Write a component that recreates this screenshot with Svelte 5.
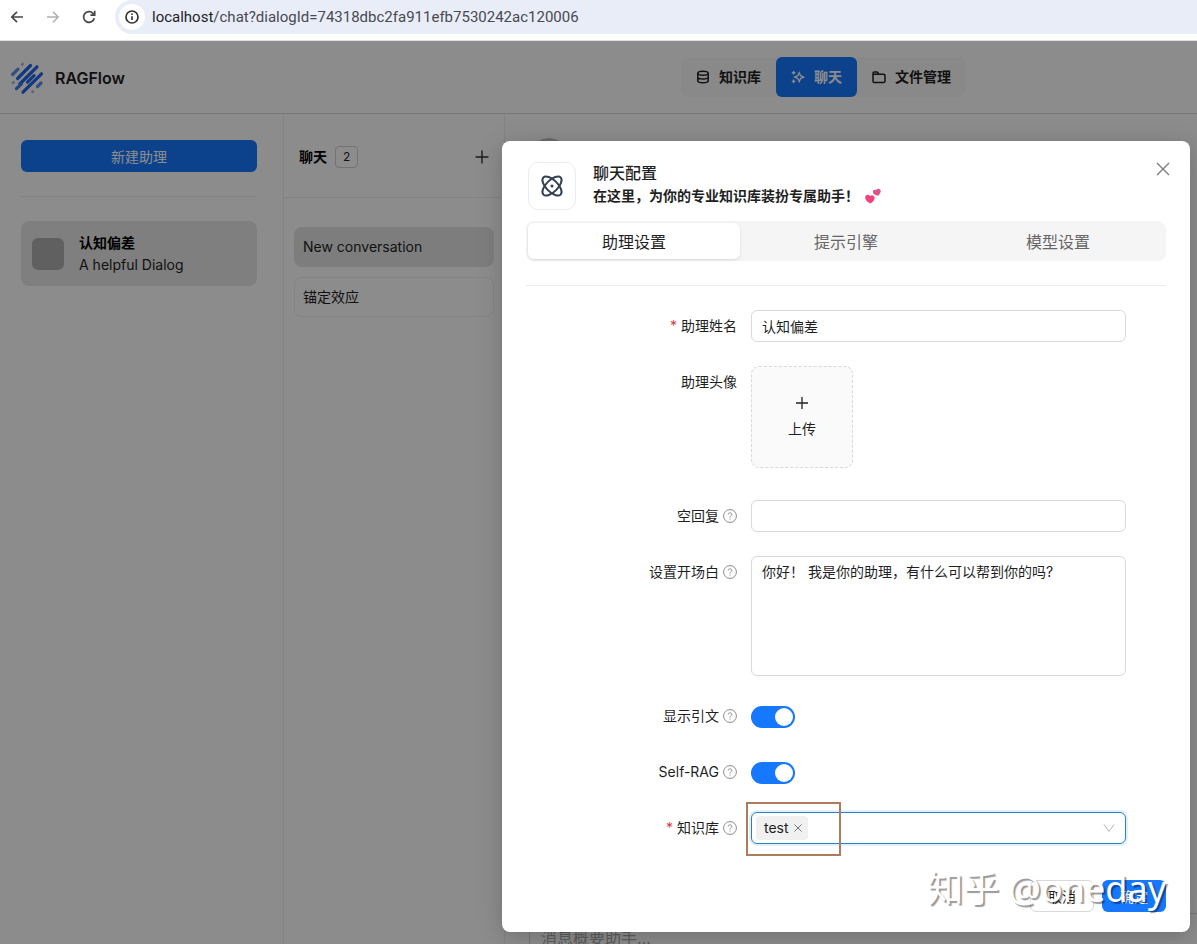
<script>
  let tab = $state(0);
  let name = $state('认知偏差');
  let emptyReply = $state('');
  let prologue = $state('你好！ 我是你的助理，有什么可以帮到你的吗?');
  let quote = $state(true);
  let selfRag = $state(true);
  let bases = $state(['test']);
  const tabs = ['助理设置', '提示引擎', '模型设置'];
</script>

{#snippet help()}
  <svg class="help" width="14" height="14" viewBox="0 0 14 14" fill="none" stroke="currentColor" aria-hidden="true">
    <circle cx="7" cy="7" r="6.4" />
    <path d="M5.1 5.6c0-1.1.8-1.8 1.9-1.8s1.9.7 1.9 1.7c0 1.4-1.9 1.4-1.9 2.9" />
    <path d="M7 9.5v1.1" />
  </svg>
{/snippet}

<div class="window">
  <div class="browser">
    <button aria-label="后退"><svg width="16" height="16" viewBox="0 0 16 16" fill="none" stroke="#474747" stroke-width="1.7"><path d="M14 8H3M8 2.8 2.8 8 8 13.2" /></svg></button>
    <button aria-label="前进"><svg width="16" height="16" viewBox="0 0 16 16" fill="none" stroke="#b0b0b0" stroke-width="1.5"><path d="M2 8h11M8 2.8 13.2 8 8 13.2" /></svg></button>
    <button aria-label="刷新"><svg width="16" height="16" viewBox="0 0 16 16" fill="none" stroke="#474747" stroke-width="1.7"><path d="M13.3 9.2A5.4 5.4 0 1 1 12 4.3l1.6 1.5M13.7 1.8v4.3H9.4" /></svg></button>
    <div class="address">
      <span class="site"><svg width="16" height="16" viewBox="0 0 16 16" fill="none" stroke="#333" stroke-width="1.7"><circle cx="8" cy="8" r="6" /><path d="M8 7.3v3.8M8 4.6v1.5" /></svg></span>
      <span class="url"><b>localhost</b>/chat?dialogId=74318dbc2fa911efb7530242ac120006</span>
    </div>
  </div>

  <div class="app">
    <header>
      <a class="brand" href="#home">
        <svg width="34" height="34" viewBox="0 0 34 34" fill="none" stroke-linecap="round" stroke-width="3.2">
          <g stroke="#2566e8">
            <path d="M7.6 17.5 20.5 4.5" /><path d="M9.8 23 27 5.8" />
            <path d="M13 31.2 31.500 12.8" /><path d="M17.500 21.2 24 14.6" />
          </g>
          <path d="M2.6 13.5 8 8.2" stroke="#5b92e8" />
          <path d="M6.5 27.6 11.5 22.800" stroke="#3f7de6" />
          <path d="M27.5 25.5 31 22" stroke="#5b92e8" />
          <g stroke="#a5bce0" stroke-width="2.8"><path d="M3 21.8l.6-.5M22.5 30.8l.4-.4M12.2 3.5l.4-.4" /></g>
        </svg>
        <span>RAGFlow</span>
      </a>
      <nav>
        <a href="#knowledge"><svg width="14" height="14" viewBox="0 0 14 14" fill="none" stroke="currentColor" stroke-width="1.5"><ellipse cx="7" cy="3.2" rx="5.2" ry="2" /><path d="M1.8 3.2v7.6c0 1.1 2.3 2 5.2 2s5.2-.9 5.2-2V3.2M1.8 7c0 1.1 2.3 2 5.2 2s5.2-.9 5.2-2" /></svg>知识库</a>
        <a href="#chat" class="active"><svg width="14" height="14" viewBox="0 0 14 14" fill="none" stroke="currentColor" stroke-width="1.4"><path d="m8.2 2.7 1.4 3 3 1.4-3 1.4-1.4 3-1.4-3-3-1.4 3-1.4zM2.6 1v3.6M.8 2.8h3.6M2.6 9.6v3.6M.8 11.4h3.6" /></svg>聊天</a>
        <a href="#files"><svg width="14" height="14" viewBox="0 0 14 14" fill="none" stroke="currentColor" stroke-width="1.5"><path d="M1 11V3.4c0-.8.5-1.3 1.3-1.3h2.5c.6 0 .9.2 1.2.7l.8 1.4h4.4c1.1 0 1.8.6 1.8 1.7V11c0 1-.6 1.6-1.6 1.6H2.6C1.6 12.6 1 12 1 11zM1 4.3h6" /></svg>文件管理</a>
      </nav>
    </header>

    <div class="columns">
      <aside class="assistants">
        <button class="primary">新建助理</button>
        <hr />
        <div class="assistant">
          <span class="thumb"></span>
          <div><strong>认知偏差</strong><span>A helpful Dialog</span></div>
        </div>
      </aside>
      <section class="talks">
        <div class="talks-head">
          <strong>聊天</strong><span class="count">2</span>
          <button aria-label="新建聊天"><svg width="14" height="14" viewBox="0 0 14 14" stroke="#333" stroke-width="1.4"><path d="M7 .5v13M.5 7h13" /></svg></button>
        </div>
        <ul>
          <li class="current">New conversation</li>
          <li>锚定效应</li>
        </ul>
      </section>
      <main>
        <span class="avatar"></span>
        <input class="composer" aria-label="消息" placeholder="消息概要助手..." />
      </main>
    </div>

    <div class="mask">
      <div class="modal" role="dialog" aria-labelledby="dialog-title">
        <div class="modal-head">
          <span class="logo-box">
            <svg width="24" height="24" viewBox="0 0 24 24" fill="none" stroke="#344054" stroke-width="2">
              <ellipse cx="12" cy="12" rx="12.2" ry="5.8" transform="rotate(45 12 12)" />
              <ellipse cx="12" cy="12" rx="12.2" ry="5.8" transform="rotate(-45 12 12)" />
              <circle cx="12" cy="12" r="1.5" fill="#344054" stroke="none" />
            </svg>
          </span>
          <div class="titles">
            <h1 id="dialog-title">聊天配置</h1>
            <p>在这里，为你的专业知识库装扮专属助手！
              <svg width="16" height="16" viewBox="0 0 16 16"><path fill="#f2447c" d="M5.6 15.6C2.800 14.400.3 12.300.2 9.700 0 6.900 3.300 5.700 5 8c2.200-1.800 5.200.1 4.600 2.800-.5 2-2.400 3.700-4 4.800z" /><path fill="#d9538c" d="M13.200 7.800C10.900 7.500 8.400 6.500 7.900 4.600 7.400 2.500 9.500 1 11.200 2.300c.8-2.200 4.300-1.900 4.500.6.1 1.700-1.300 3.500-2.500 4.900z" /></svg>
            </p>
          </div>
          <button class="close" aria-label="关闭"><svg width="14" height="14" viewBox="0 0 14 14" stroke="#7d7d7d" stroke-width="1.4"><path d="m1 1 12 12M13 1 1 13" /></svg></button>
        </div>

        <div class="tabs" role="tablist">
          {#each tabs as label, i}
            <button role="tab" aria-selected={tab === i} class:selected={tab === i} onclick={() => (tab = i)}>{label}</button>
          {/each}
        </div>
        <hr />

        <form onsubmit={(e) => e.preventDefault()}>
          <div class="row">
            <label for="name"><i>*</i>助理姓名</label>
            <input id="name" class="field" type="text" bind:value={name} />
          </div>
          <div class="row avatar-row">
            <label for="upload">助理头像</label>
            <button id="upload" class="upload" type="button">
              <svg width="14" height="14" viewBox="0 0 14 14" stroke="#222" stroke-width="1.3"><path d="M7 1v12M1 7h12" /></svg>
              上传
            </button>
          </div>
          <div class="row">
            <label for="empty">空回复{@render help()}</label>
            <input id="empty" class="field" type="text" bind:value={emptyReply} />
          </div>
          <div class="row">
            <label for="prologue">设置开场白{@render help()}</label>
            <textarea id="prologue" class="field" bind:value={prologue}></textarea>
          </div>
          <div class="row">
            <label for="quote">显示引文{@render help()}</label>
            <input id="quote" class="switch" type="checkbox" role="switch" bind:checked={quote} />
          </div>
          <div class="row">
            <label for="rag">Self-RAG{@render help()}</label>
            <input id="rag" class="switch" type="checkbox" role="switch" bind:checked={selfRag} />
          </div>
          <div class="row">
            <label for="base"><i>*</i>知识库{@render help()}</label>
            <div class="picker">
              {#each bases as base}
                <span class="tag">{base}<button type="button" aria-label="移除" onclick={() => (bases = [])}><svg width="8" height="8" viewBox="0 0 8 8" stroke="#777"><path d="m.5.5 7 7M7.5.5l-7 7" /></svg></button></span>
              {/each}
              <select id="base"><option value=""></option></select>
              <svg class="chevron" width="12" height="12" viewBox="0 0 12 12" fill="none" stroke="#b5b5b5"><path d="m1 2.5 5 7 5-7" /></svg>
              <span class="marker"></span>
            </div>
          </div>
          <footer>
            <button type="button">取消</button>
            <button type="submit" class="primary">确定</button>
            <span class="watermark">知乎 @oneday</span>
          </footer>
        </form>
      </div>
    </div>
  </div>
</div>

<style>
  :global(body) { margin: 0; }
  .window, .window :is(button, input, textarea, select) {
    font-family: Inter, "Noto Sans CJK SC", sans-serif;
    font-size: 14px;
  }
  .window * { box-sizing: border-box; }
  .window { height: 100vh; display: flex; flex-direction: column; overflow: hidden; line-height: 22px; color: #1f1f1f; background: #fff; }
  button { padding: 0; border: 0; background: none; color: inherit; cursor: pointer; }
  a { color: inherit; text-decoration: none; }
  svg { flex: none; display: block; }
  hr { width: 100%; height: 1px; margin: 24px 0; border: 0; background: #ececec; }
  .primary { background: #1677ff; color: #fff; border-radius: 6px; }

  .browser { flex: none; height: 41px; padding-left: 9px; display: flex; gap: 20px; border-bottom: 1px solid #dde0dd; }
  .browser > button { height: 34px; }
  .address { flex: 1; margin-left: -2px; height: 34px; padding-left: 4px; display: flex; align-items: center; gap: 7px; background: #e9edf8; border-radius: 17px 0 0 17px; }
  .site { width: 26px; height: 26px; display: grid; place-items: center; border-radius: 50%; background: #fff; }
  .window .url { font: 15px/22px Roboto, sans-serif; color: #474a50; }
  .url b { font-weight: 400; color: #1f1f1f; }

  .app { position: relative; flex: 1; min-height: 0; display: flex; flex-direction: column; }
  header { flex: none; height: 73px; padding-left: 10px; display: grid; grid-template-columns: 1fr auto 231px; align-items: center; border-bottom: 1px solid #d9d9d9; }
  .brand { padding-top: 2px; display: flex; align-items: center; gap: 11px; font-size: 16px; font-weight: 600; }
  nav { display: flex; background: #fafafa; border-radius: 8px; }
  nav a { height: 40px; padding: 0 15px; display: flex; align-items: center; gap: 9px; font-weight: 600; border-radius: 6px; }
  nav .active { background: #1677ff; color: #fff; }

  .columns { flex: 1; min-height: 0; display: flex; }
  .assistants { width: 284px; padding: 26px 26px 0 21px; border-right: 1px solid #eee; }
  .assistants .primary { display: block; width: 100%; height: 32px; }
  .assistant { height: 65px; padding: 0 11px; display: flex; align-items: center; gap: 15px; background: #e7e7e7; border-radius: 8px; }
  .assistant div { display: flex; flex-direction: column; }
  .assistant strong, .talks strong { font-weight: 600; color: #000; }
  .thumb { width: 32px; height: 32px; border-radius: 6px; background: #b0b0b0; }
  .talks { width: 221px; border-right: 1px solid #eee; }
  .talks-head { height: 84px; padding: 3px 15px 0; display: flex; align-items: center; gap: 8px; border-bottom: 1px solid #eee; }
  .talks-head button { margin-left: auto; }
  .count { padding: 0 7px; font-size: 12px; line-height: 20px; border: 1px solid #d0d0d0; border-radius: 4px; }
  ul { margin: 0; padding: 29px 10px; display: flex; flex-direction: column; gap: 10px; list-style: none; }
  li { height: 40px; padding: 0 8px; line-height: 38px; border: 1px solid #f0f0f0; border-radius: 8px; }
  .current { background: #e4e4e4; border-color: #e4e4e4; }
  main { flex: 1; padding: 24px 0 0 24px; display: flex; flex-direction: column; justify-content: space-between; }
  .avatar { width: 40px; height: 40px; border-radius: 50%; background: #c4c4c4; }
  .window .composer { height: 50px; margin-bottom: -19px; padding: 0 11px; font-size: 16px; border: 1px solid #d9d9d9; border-right: 0; }
  .composer::placeholder { color: #aaa; }

  .mask { position: absolute; inset: 0; padding: 100px 7px 12px; display: flex; justify-content: flex-end; align-items: flex-start; background: rgba(0, 0, 0, 0.45); }
  .modal { width: 688px; padding: 20px 24px; background: #fff; border-radius: 8px; box-shadow: 0 6px 16px rgba(0, 0, 0, 0.08), 0 3px 28px rgba(0, 0, 0, 0.12); }
  .modal-head { display: flex; align-items: flex-start; height: 60px; margin-right: -8px; padding: 1px 0 0 2px; }
  .logo-box { width: 48px; height: 48px; display: grid; place-items: center; border: 1px solid #eaecf0; border-radius: 10px; }
  .titles { margin-left: 17px; flex: 1; }
  h1 { margin: 0; font-size: 16px; line-height: 22px; font-weight: 500; }
  p { margin: 0; display: flex; align-items: center; gap: 6px; line-height: 24px; font-weight: 600; }
  .close { width: 18px; height: 14px; }
  .tabs { height: 40px; padding: 2px; display: grid; grid-template-columns: repeat(3, 1fr); background: #f5f5f5; border-radius: 8px; }
  .window .tabs button { font-size: 16px; color: #666; border-radius: 6px; }
  .window .tabs .selected { color: #1f1f1f; background: #fff; box-shadow: 0 1px 3px rgba(0, 0, 0, 0.12); }

  form { display: flex; flex-direction: column; gap: 24px; }
  .row { padding-right: 40px; display: grid; grid-template-columns: 9fr 15fr; align-items: start; }
  .avatar-row { padding-bottom: 8px; }
  label { height: 32px; padding-right: 14px; display: flex; align-items: center; justify-content: flex-end; gap: 4px; }
  label i { color: #e0393e; font-style: normal; }
  .help { color: #8c8c8c; }
  .field { width: 100%; height: 32px; padding: 4px 10px; color: #1f1f1f; border: 1px solid #d9d9d9; border-radius: 6px; outline: 0; background: #fff; }
  textarea.field { display: block; height: 120px; line-height: 22px; resize: none; }
  .upload { width: 102px; height: 102px; display: flex; flex-direction: column; align-items: center; justify-content: center; gap: 8px; border: 1px dashed #d9d9d9; border-radius: 8px; background: #fafafa; }
  .switch { appearance: none; width: 44px; height: 22px; margin: 6px 0 4px; padding: 2px; display: flex; border-radius: 11px; background: #bfbfbf; }
  .switch::before { content: ""; width: 18px; height: 18px; border-radius: 50%; background: #fff; }
  .switch:checked { justify-content: flex-end; background: #1677ff; }
  .picker { position: relative; height: 32px; padding: 0 10px 0 4px; display: flex; align-items: center; border: 1px solid #2f7cc0; border-radius: 6px; box-shadow: 0 0 0 2px #dff3ff; }
  .picker select { flex: 1; min-width: 0; appearance: none; border: 0; outline: 0; background: none; }
  .tag { height: 24px; padding: 0 6px 0 8px; display: flex; align-items: center; gap: 5px; background: #f0f0f0; border-radius: 4px; }
  .marker { position: absolute; left: -6px; top: -11px; width: 95px; height: 54px; border: 2px solid #b07a5c; pointer-events: none; }

  footer { position: relative; margin-top: 12px; display: flex; justify-content: flex-end; gap: 8px; }
  footer button { width: 64px; height: 32px; border-radius: 6px; }
  footer button:not(.primary) { border: 1px solid #d9d9d9; }
  .watermark { position: absolute; right: 0; bottom: 0; font: 36px/46px "Noto Sans", "Noto Sans CJK SC", sans-serif; color: #fff; text-shadow: 2px 2px 1px rgba(0, 0, 0, 0.4); white-space: nowrap; pointer-events: none; }
</style>
